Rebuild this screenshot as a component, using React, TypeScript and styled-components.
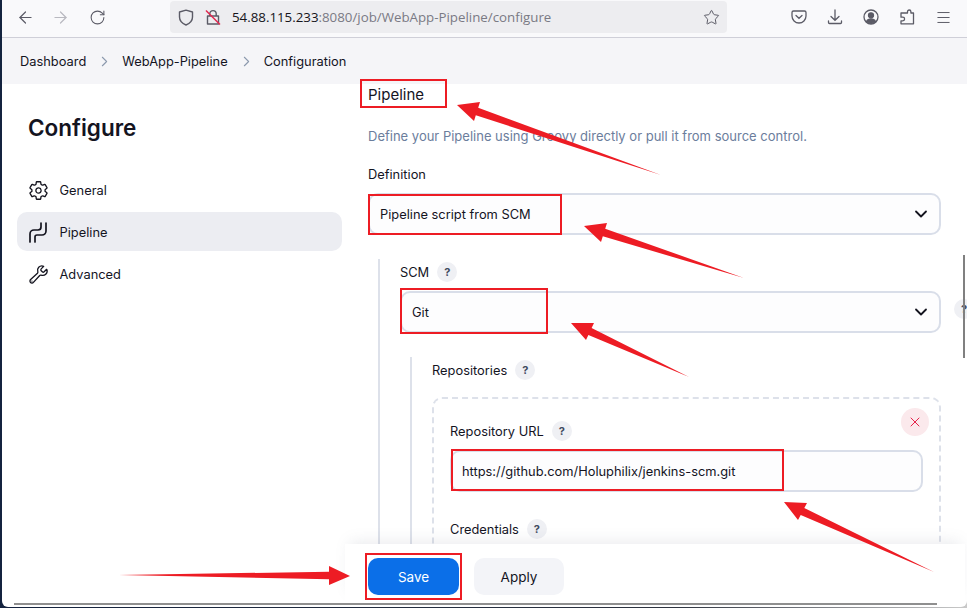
import styled, { createGlobalStyle } from "styled-components";
import { ArrowLeft, ArrowRight, ChevronDown, ChevronRight, Menu, RotateCw, Star, X } from "lucide-react";
import { IoBuildOutline, IoSettingsOutline } from "react-icons/io5";

const GlobalStyle = createGlobalStyle`
  html, body {
    margin: 0;
    padding: 0;
    height: 608px;
    overflow: hidden;
    background: linear-gradient(90deg, #14233f 0, #2e3440 70%, #c9c9c9 100%);
  }
  * { box-sizing: border-box; }
`;

type Pt = [number, number];

// tail, tip and the two barbs of each hand-drawn arrow
const arrows: { tail: Pt; tip: Pt; a: Pt; b: Pt }[] = [
  { tail: [661, 175], tip: [457, 105], a: [480, 102], b: [474, 121] },
  { tail: [744, 278], tip: [584, 226], a: [607, 223], b: [601, 242] },
  { tail: [689, 377], tip: [571, 323], a: [594, 323], b: [586, 340] },
  { tail: [934, 572], tip: [784, 502], a: [807, 503], b: [798, 520] },
  { tail: [119, 575], tip: [350, 576], a: [329, 566], b: [329, 585] },
];

const marks = [
  { x: 361, y: 80, w: 85, h: 27 },
  { x: 369, y: 195, w: 192, h: 39 },
  { x: 401, y: 289, w: 146, h: 44 },
  { x: 452, y: 450, w: 331, h: 40 },
  { x: 366, y: 554, w: 95, h: 45 },
];

function arrowPoints({ tail, tip, a, b }: { tail: Pt; tip: Pt; a: Pt; b: Pt }) {
  const mx = (a[0] + b[0]) / 2;
  const my = (a[1] + b[1]) / 2;
  const na: Pt = [mx + (a[0] - mx) * 0.4, my + (a[1] - my) * 0.4];
  const nb: Pt = [mx + (b[0] - mx) * 0.4, my + (b[1] - my) * 0.4];
  return [tail, na, a, tip, b, nb].map((p) => p.join(",")).join(" ");
}

function App() {
  return (
    <>
      <GlobalStyle />
      <Screen>
        <Window>
          <Toolbar>
            <NavGroup>
              <NavButton><ArrowLeft size={19} strokeWidth={1.5} /></NavButton>
              <NavButton $off><ArrowRight size={19} strokeWidth={1.5} /></NavButton>
              <NavButton><RotateCw size={17} strokeWidth={1.5} /></NavButton>
            </NavGroup>
            <UrlBar>
              <svg width="16" height="17" viewBox="0 0 16 17" fill="none" stroke="#5b5b66" strokeWidth="1.4">
                <path d="M8 1.2 14.5 3v5c0 3.8-2.8 6.5-6.5 8C4.3 14.5 1.5 11.8 1.5 8V3z" strokeLinejoin="round" />
              </svg>
              <svg width="16" height="17" viewBox="0 0 16 17" fill="none">
                <path d="M4.8 7V4.8a3.2 3.2 0 0 1 6.4 0V7M2.5 7h11v8h-11z" stroke="#5b5b66" strokeWidth="1.4" strokeLinejoin="round" />
                <path d="M1 1.5 15 15.5" stroke="#e22850" strokeWidth="1.5" />
              </svg>
              <UrlText>54.88.115.233<UrlRest>:8080/job/WebApp-Pipeline/configure</UrlRest></UrlText>
              <Star size={17} strokeWidth={1.4} color="#5b5b66" />
            </UrlBar>
            <ToolIcons>
              <svg width="16" height="16" viewBox="0 0 16 16" fill="none" stroke="#5b5b66" strokeWidth="1.3">
                <path d="M2.5 2h11A1.5 1.5 0 0 1 15 3.5V7a7 7 0 0 1-14 0V3.5A1.5 1.5 0 0 1 2.5 2z" />
                <path d="M5 6.5 8 9.3l3-2.8" strokeLinecap="round" />
              </svg>
              <svg width="16" height="16" viewBox="0 0 16 16" fill="none" stroke="#5b5b66" strokeWidth="1.3">
                <path d="M8 1v10M4 7.5 8 11.3l4-3.8M1.5 12v1.5A1 1 0 0 0 2.5 14.5h11a1 1 0 0 0 1-1V12" strokeLinecap="round" />
              </svg>
              <svg width="16" height="16" viewBox="0 0 16 16" fill="none" stroke="#5b5b66" strokeWidth="1.3">
                <circle cx="8" cy="8" r="7" />
                <circle cx="8" cy="6.3" r="2.5" fill="#5b5b66" />
                <path d="M3.5 12.5c1-1.8 2.5-2.5 4.5-2.5s3.5.7 4.5 2.5A6.5 6.5 0 0 1 3.5 12.5z" fill="#5b5b66" />
              </svg>
              <svg width="16" height="16" viewBox="0 0 16 16" fill="none" stroke="#5b5b66" strokeWidth="1.3">
                <path d="M8.5 4V2.7a1.7 1.7 0 0 1 3.4 0V4h2.6v10.8H2v-3h1.8a1.8 1.8 0 0 0 0-3.6H2V4z" strokeLinejoin="round" />
              </svg>
              <Menu size={17} strokeWidth={1.4} color="#5b5b66" />
            </ToolIcons>
          </Toolbar>

          <Breadcrumbs>
            <Crumb>Dashboard</Crumb>
            <CrumbArrow><ChevronRight size={17} strokeWidth={1.5} /></CrumbArrow>
            <Crumb>WebApp-Pipeline</Crumb>
            <CrumbArrow><ChevronRight size={17} strokeWidth={1.5} /></CrumbArrow>
            <Crumb>Configuration</Crumb>
          </Breadcrumbs>

          <Body>
            <Sidebar>
              <SideTitle>Configure</SideTitle>
              <SideNav>
                <SideItem>
                  <IoSettingsOutline size={21} />
                  General
                </SideItem>
                <SideItem $active>
                  <svg width="21" height="21" viewBox="0 0 21 21" fill="none" stroke="#14141f" strokeWidth="1.7" strokeLinecap="round">
                    <path d="M2 20v-8a4 4 0 0 1 4-4h4a3 3 0 0 0 3-3V1" />
                    <path d="M7 20v-5a2 2 0 0 1 2-2h5a4 4 0 0 0 4-4V1" />
                  </svg>
                  Pipeline
                </SideItem>
                <SideItem>
                  <IoBuildOutline size={21} />
                  Advanced
                </SideItem>
              </SideNav>
            </Sidebar>

            <Main>
              <SectionTitle>Pipeline</SectionTitle>
              <Description>Define your Pipeline using Groovy directly or pull it from source control.</Description>
              <FieldLabel $top={18}>Definition</FieldLabel>
              <Select>
                Pipeline script from SCM
                <ChevronDown size={20} strokeWidth={2.2} />
              </Select>

              <Nested $top={24}>
                <FieldLabel>SCM <Help>?</Help></FieldLabel>
                <SelectRow>
                  <Select>
                    Git
                    <ChevronDown size={20} strokeWidth={2.2} />
                  </Select>
                  <Help>?</Help>
                </SelectRow>

                <Nested $top={24}>
                  <FieldLabel>Repositories <Help>?</Help></FieldLabel>
                  <RepoCard>
                    <RemoveButton><X size={16} strokeWidth={1.5} /></RemoveButton>
                    <FieldLabel>Repository URL <Help>?</Help></FieldLabel>
                    <TextInput>https://github.com/Holuphilix/jenkins-scm.git</TextInput>
                    <FieldLabel $top={27}>Credentials <Help>?</Help></FieldLabel>
                  </RepoCard>
                </Nested>
              </Nested>
            </Main>

            <BottomBar>
              <SaveButton>Save</SaveButton>
              <ApplyButton>Apply</ApplyButton>
            </BottomBar>
          </Body>

          <DesktopEdge />
          <Scrollbar />
        </Window>

        <Annotations viewBox="0 0 967 608">
          {marks.map((m) => (
            <rect key={m.x} x={m.x} y={m.y} width={m.w} height={m.h} fill="none" stroke="#ed1c24" strokeWidth="2" />
          ))}
          {arrows.map((a) => (
            <polygon key={a.tail[0]} points={arrowPoints(a)} fill="#ed1c24" />
          ))}
        </Annotations>
      </Screen>
    </>
  );
}

export default App;

const Screen = styled.div`
  position: relative;
  width: 967px;
  height: 608px;
  overflow: hidden;
  font-family: Inter, "Liberation Sans", sans-serif;
  font-size: 12.85px;
  color: #14141f;
`;

const Window = styled.div`
  position: relative;
  display: flex;
  flex-direction: column;
  height: 607px;
  margin-left: 2px;
  background: #fff;
  border-bottom-left-radius: 6px;
  border-bottom-right-radius: 6px;
  overflow: hidden;
`;

const Toolbar = styled.div`
  display: flex;
  align-items: flex-start;
  flex: none;
  height: 38px;
  background: #f9f9fb;
  border-bottom: 1px solid #cfcfd8;
`;

const NavGroup = styled.div`
  display: flex;
  align-items: center;
  width: 168px;
  height: 34px;
  padding-left: 14px;
  gap: 16px;
`;

const NavButton = styled.span<{ $off?: boolean }>`
  display: flex;
  width: 19px;
  justify-content: center;
  color: ${(p) => (p.$off ? "#b9b9c0" : "#5b5b66")};

  &:last-child {
    margin-left: 2px;
  }
`;

const UrlBar = styled.div`
  display: flex;
  align-items: center;
  gap: 11px;
  width: 557px;
  height: 32px;
  margin-top: 1px;
  padding: 0 7px 0 8px;
  background: #ededf0;
  border-radius: 4px;
`;

const UrlText = styled.span`
  flex: 1;
  font-family: "Open Sans", "Liberation Sans", sans-serif;
  font-size: 13.3px;
  color: #15141a;
`;

const UrlRest = styled.span`
  color: #7a7a84;
`;

const ToolIcons = styled.div`
  display: flex;
  align-items: center;
  gap: 20px;
  height: 34px;
  margin-left: 64px;
`;

const Breadcrumbs = styled.nav`
  display: flex;
  align-items: center;
  flex: none;
  height: 46px;
  padding-left: 18px;
  background: #f5f5f8;
`;

const Crumb = styled.span`
  font-size: 12.85px;
  color: #14141f;
`;

const CrumbArrow = styled.span`
  display: flex;
  width: 17px;
  margin: 0 9px 0 10px;
  color: #8b99ad;
`;

const Body = styled.div`
  position: relative;
  flex: 1;
  display: flex;
  min-height: 0;
  overflow: hidden;
`;

const Sidebar = styled.aside`
  flex: none;
  width: 366px;
  padding: 29px 26px 0 15px;
`;

const SideTitle = styled.h1`
  margin: 0 0 27px 11px;
  font-size: 22.5px;
  line-height: 30px;
  font-weight: 600;
`;

const SideNav = styled.div`
  display: flex;
  flex-direction: column;
  gap: 3px;
`;

const SideItem = styled.div<{ $active?: boolean }>`
  display: flex;
  align-items: center;
  gap: 10.5px;
  height: 39px;
  padding: 2px 0 0 11px;
  border-radius: 10px;
  background: ${(p) => (p.$active ? "#ecedf2" : "transparent")};
`;

const Main = styled.main`
  flex: 1;
  min-width: 0;
  padding-right: 26px;
`;

const SectionTitle = styled.h2`
  margin: 0;
  padding-top: 1px;
  font-size: 15px;
  line-height: 20px;
  font-weight: 400;
`;

const Description = styled.p`
  margin: 21px 0 0;
  font-size: 13px;
  line-height: 20px;
  color: #6b7d9c;
`;

const FieldLabel = styled.div<{ $top?: number }>`
  display: flex;
  align-items: center;
  gap: 8px;
  height: 20px;
  margin-top: ${(p) => p.$top ?? 0}px;
`;

const Help = styled.span`
  display: inline-flex;
  flex: none;
  align-items: center;
  justify-content: center;
  width: 20px;
  height: 20px;
  border-radius: 50%;
  background: #eff0f4;
  font-size: 11px;
  font-weight: 700;
  color: #3f4a5f;
`;

const Select = styled.div`
  display: flex;
  flex: 1;
  align-items: center;
  justify-content: space-between;
  height: 42px;
  margin-top: 9px;
  padding: 0 8px 0 10px;
  background: #fdfdfe;
  border: 2px solid #d9dee9;
  border-radius: 10px;

  svg {
    color: #14141f;
  }
`;

const SelectRow = styled.div`
  display: flex;
  align-items: center;
  gap: 13px;
  margin-right: -33px;

  ${Help} {
    margin-top: 3px;
  }
`;

const Nested = styled.div<{ $top: number }>`
  margin: ${(p) => p.$top}px 0 0 10px;
  padding: 3px 0 0 20px;
  border-left: 2px solid #dde1ea;
`;

const RepoCard = styled.div`
  position: relative;
  height: 200px;
  margin-top: 17px;
  padding: 22px 16px 0 16px;
  border: 2px dashed #dde1ea;
  border-radius: 10px;
`;

const RemoveButton = styled.span`
  position: absolute;
  top: 9px;
  right: 10px;
  display: flex;
  align-items: center;
  justify-content: center;
  width: 28px;
  height: 28px;
  border-radius: 50%;
  background: #fbe9ec;
  color: #e6224a;
`;

const TextInput = styled.div`
  display: flex;
  align-items: center;
  height: 42px;
  margin-top: 9px;
  padding: 0 10px;
  background: #fdfdfe;
  border: 2px solid #d9dee9;
  border-radius: 10px;
`;

const BottomBar = styled.div`
  position: absolute;
  left: 343px;
  right: 2px;
  bottom: 0;
  display: flex;
  gap: 15px;
  height: 59px;
  padding: 14px 0 0 23px;
  background: #fff;
  box-shadow: 0 -7px 14px -5px rgba(120, 125, 140, 0.16);
`;

const SaveButton = styled.button`
  width: 91px;
  height: 37px;
  border: none;
  border-radius: 10px;
  background: #0b6fe8;
  color: #fff;
  font: 400 13.5px Inter, "Liberation Sans", sans-serif;
`;

const ApplyButton = styled.button`
  width: 90px;
  height: 37px;
  border: none;
  border-radius: 10px;
  background: #f3f4f8;
  color: #14141f;
  font: 400 13.5px Inter, "Liberation Sans", sans-serif;
`;

const DesktopEdge = styled.div`
  flex: none;
  height: 4px;
  margin: 0 30px 0 12px;
  border-top: 2px solid #8f8f8f;
`;

const Scrollbar = styled.div`
  position: absolute;
  top: 255px;
  right: 2px;
  width: 2px;
  height: 103px;
  background: #808080;
`;

const Annotations = styled.svg`
  position: absolute;
  top: 0;
  left: 0;
  width: 967px;
  height: 608px;
  pointer-events: none;
`;
